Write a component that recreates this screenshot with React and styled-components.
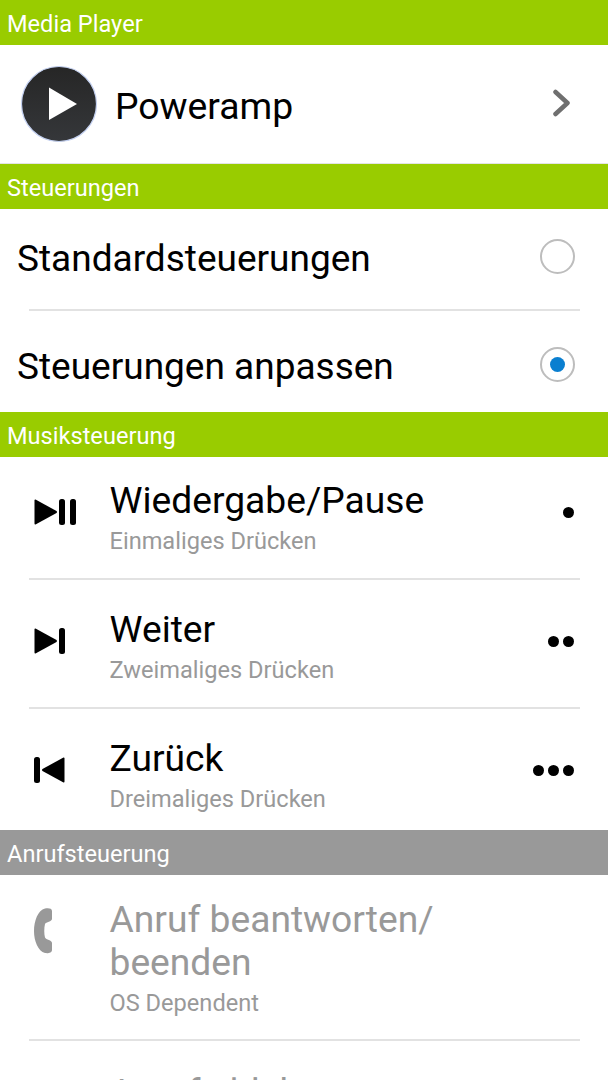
import React from 'react'
import styled, { createGlobalStyle } from 'styled-components'

const GlobalStyle = createGlobalStyle`
  html, body { margin: 0; padding: 0; background: #fff; }
  body { font-family: Roboto, "Liberation Sans", sans-serif; overflow: hidden; }
`

const Page = styled.div`
  width: 608px;
  height: 1080px;
  overflow: hidden;
  background: #fff;
`

const SectionHeader = styled.div`
  height: 45px;
  box-sizing: border-box;
  padding: 2px 7px 0;
  display: flex;
  align-items: center;
  background: ${p => (p.$disabled ? '#999999' : '#99cc00')};
  color: #fff;
  font-size: 23.6px;
`

const PlayerRow = styled.div`
  height: 119px;
  display: flex;
  align-items: center;
  padding: 0 37px 0 20px;
  border-bottom: 1px solid #e4e4e4;
  box-sizing: border-box;
`

const PlayerName = styled.div`
  flex: 1;
  margin: 4px 0 0 17px;
  font-size: 37.3px;
  color: #000;
`

const ChevronWrap = styled.div`
  display: flex;
  margin-bottom: 3px;
`

const ChoiceRow = styled.div`
  height: ${p => p.$height}px;
  display: flex;
  align-items: flex-start;
  justify-content: space-between;
  padding: ${p => p.$top}px 33px 0 17px;
  box-sizing: border-box;
`

const ChoiceLabel = styled.div`
  font-size: 37px;
  line-height: 43px;
  color: #000;
`

const Radio = styled.div`
  width: 35px;
  height: 35px;
  margin-top: 2px;
  box-sizing: border-box;
  border-radius: 50%;
  border: 2px solid #bdbdbd;
  display: flex;
  align-items: center;
  justify-content: center;
`

const RadioDot = styled.div`
  width: 15px;
  height: 15px;
  border-radius: 50%;
  background: #0a7fd0;
`

const Divider = styled.div`
  height: 2px;
  margin: 0 28px 0 29px;
  background: #e2e2e2;
`

const ActionRow = styled.div`
  display: flex;
  align-items: flex-start;
  height: ${p => p.$height}px;
  box-sizing: border-box;
  padding: ${p => p.$top}px 33px 0 34px;
  color: ${p => (p.$disabled ? '#999999' : '#000')};
`

const ActionIcon = styled.div`
  width: 75.5px;
  height: 66px;
  flex: none;
  display: flex;
  align-items: center;
`

const ActionText = styled.div`
  flex: 1;
  min-width: 0;
  max-width: 440px;
`

const ActionTitle = styled.div`
  font-size: 37.2px;
  line-height: 43px;
`

const ActionSub = styled.div`
  margin-top: 5px;
  font-size: 23.6px;
  line-height: 28px;
  color: #999999;
`

const Dots = styled.div`
  display: flex;
  align-items: center;
  gap: 4px;
  height: 66px;
  margin-left: auto;
  margin-right: 1px;
`

const Dot = styled.div`
  width: 11px;
  height: 11px;
  border-radius: 50%;
  background: #000;
`

const PlayerLogo = () => (
  <svg width="78" height="78" viewBox="0 0 78 78">
    <defs>
      <linearGradient id="logoFill" x1="0" y1="0" x2="0" y2="1">
        <stop offset="0" stopColor="#262626" />
        <stop offset="1" stopColor="#35373a" />
      </linearGradient>
    </defs>
    <circle cx="39" cy="39" r="37.500" fill="url(#logoFill)" stroke="#c3d0f0" strokeWidth="1.200" />
    <path d="M29 22.500 L57 39 L29 55 Z" fill="#fff" />
  </svg>
)

const Chevron = () => (
  <svg width="20" height="28" viewBox="0 0 20 28">
    <path d="M4.500 3 L16.500 14 L4.500 25" fill="none" stroke="#6f6f6f" strokeWidth="4.500" strokeLinecap="round" strokeLinejoin="round" />
  </svg>
)

const PlayPauseIcon = () => (
  <svg width="42" height="26" viewBox="0 0 42 26">
    <path d="M1.500 0.500 L22.500 12 Q23.500 13 22.500 14 L1.500 25.500 Q0.500 25.800 0.500 24.500 L0.500 1.500 Q0.500 0.200 1.500 0.500 Z" fill="#000" />
    <rect x="25" y="0" width="6" height="26" rx="2.500" fill="#000" />
    <rect x="36" y="0" width="6" height="26" rx="2.500" fill="#000" />
  </svg>
)

const NextIcon = () => (
  <svg width="31" height="26" viewBox="0 0 31 26">
    <path d="M1.500 0.500 L22.500 12 Q23.500 13 22.500 14 L1.500 25.500 Q0.500 25.800 0.500 24.500 L0.500 1.500 Q0.500 0.200 1.500 0.500 Z" fill="#000" />
    <rect x="25" y="0" width="6" height="26" rx="2.500" fill="#000" />
  </svg>
)

const PrevIcon = () => (
  <svg width="31" height="26" viewBox="0 0 31 26">
    <rect x="0" y="0" width="6" height="26" rx="2.500" fill="#000" />
    <path d="M29.500 0.500 L8.500 12 Q7.500 13 8.500 14 L29.500 25.500 Q30.500 25.800 30.500 24.500 L30.500 1.500 Q30.500 0.200 29.500 0.500 Z" fill="#000" />
  </svg>
)

const PhoneIcon = () => (
  <svg width="19" height="46" viewBox="0 0 19 46">
    <path
      d="M11 0.500 C14 0 18 0 18 3 L18 11 C18 13.500 12 14 11 16 C10 20 10 26 11 29.500 C12 32 18 32 18 35 L18 42 C18 45 14 45.500 11 45 C4 43 0 33 0 23 C0 13 4 2 11 0.500 Z"
      fill="#999999"
    />
  </svg>
)

const DotGroup = ({ count }) => (
  <Dots>
    {Array.from({ length: count }, (_, i) => <Dot key={i} />)}
  </Dots>
)

const App = () => (
  <Page>
    <GlobalStyle />
    <SectionHeader>Media Player</SectionHeader>
    <PlayerRow>
      <PlayerLogo />
      <PlayerName>Poweramp</PlayerName>
      <ChevronWrap><Chevron /></ChevronWrap>
    </PlayerRow>

    <SectionHeader>Steuerungen</SectionHeader>
    <ChoiceRow $height={100} $top={28}>
      <ChoiceLabel>Standardsteuerungen</ChoiceLabel>
      <Radio />
    </ChoiceRow>
    <Divider />
    <ChoiceRow $height={101} $top={34}>
      <ChoiceLabel>Steuerungen anpassen</ChoiceLabel>
      <Radio><RadioDot /></Radio>
    </ChoiceRow>

    <SectionHeader>Musiksteuerung</SectionHeader>
    <ActionRow $height={121} $top={22}>
      <ActionIcon><PlayPauseIcon /></ActionIcon>
      <ActionText>
        <ActionTitle>Wiedergabe/Pause</ActionTitle>
        <ActionSub>Einmaliges Drücken</ActionSub>
      </ActionText>
      <DotGroup count={1} />
    </ActionRow>
    <Divider />
    <ActionRow $height={127} $top={28}>
      <ActionIcon><NextIcon /></ActionIcon>
      <ActionText>
        <ActionTitle>Weiter</ActionTitle>
        <ActionSub>Zweimaliges Drücken</ActionSub>
      </ActionText>
      <DotGroup count={2} />
    </ActionRow>
    <Divider />
    <ActionRow $height={121} $top={28}>
      <ActionIcon><PrevIcon /></ActionIcon>
      <ActionText>
        <ActionTitle>Zurück</ActionTitle>
        <ActionSub>Dreimaliges Drücken</ActionSub>
      </ActionText>
      <DotGroup count={3} />
    </ActionRow>

    <SectionHeader $disabled>Anrufsteuerung</SectionHeader>
    <ActionRow $height={164} $top={23} $disabled>
      <ActionIcon><PhoneIcon /></ActionIcon>
      <ActionText>
        <ActionTitle>Anruf beantworten/ beenden</ActionTitle>
        <ActionSub>OS Dependent</ActionSub>
      </ActionText>
    </ActionRow>
    <Divider />
    <ActionRow $height={60} $top={30} $disabled>
      <ActionIcon />
      <ActionText>
        <ActionTitle>Anruf ablehnen</ActionTitle>
      </ActionText>
    </ActionRow>
  </Page>
)

export default App
